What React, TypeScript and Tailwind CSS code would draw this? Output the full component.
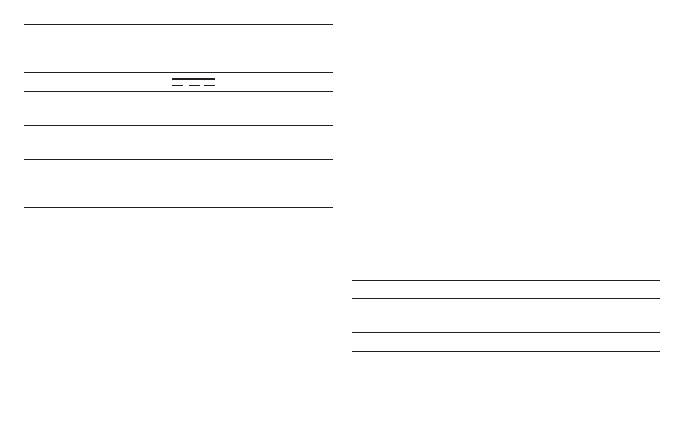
import React from "react";

function DcSymbol() {
  return (
    <svg width="43" height="9" viewBox="0 0 43 9" className="block">
      <rect x="0" y="0" width="43" height="2" fill="#231f20" />
      <rect x="0" y="7" width="11" height="1" fill="#231f20" />
      <rect x="17" y="7" width="11" height="1" fill="#231f20" />
      <rect x="32" y="7" width="11" height="1" fill="#231f20" />
    </svg>
  );
}

export default function App() {
  return (
    <div className="w-[684px] h-[443px] bg-white flex" style={{ fontFamily: '"Liberation Sans", Arial, sans-serif' }}>
      <div className="ml-[24px] mt-[24px] w-[309px] flex flex-col self-start">
        <div className="h-[48px] border-t border-[#231f20]" />
        <div className="h-[19px] border-t border-[#231f20] pl-[148px] pt-[5px]">
          <DcSymbol />
        </div>
        <div className="h-[34px] border-t border-[#231f20]" />
        <div className="h-[34px] border-t border-[#231f20]" />
        <div className="h-[49px] border-t border-b border-[#231f20]" />
      </div>
      <div className="ml-[19px] mt-[280px] w-[308px] flex flex-col self-start">
        <div className="h-[18px] border-t border-[#231f20]" />
        <div className="h-[34px] border-t border-[#231f20]" />
        <div className="h-[20px] border-t border-b border-[#231f20]" />
      </div>
    </div>
  );
}
